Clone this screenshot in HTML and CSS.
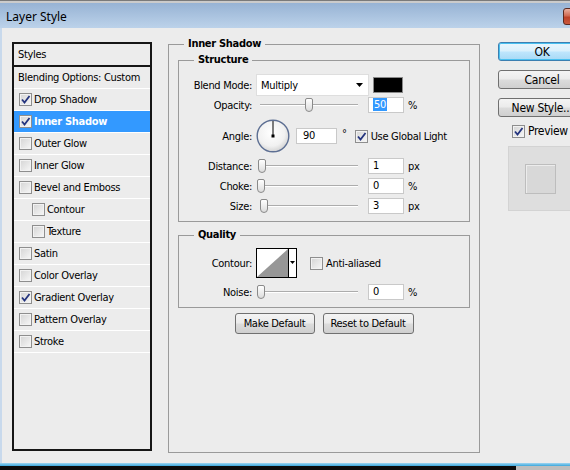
FILE: index.html
```html
<!DOCTYPE html>
<html lang="en">
<head>
    <meta charset="UTF-8">
    <title>Layer Style</title>
    <link rel="stylesheet" href="styles.css">
</head>
<body>
    <div class="titlebar">
        <span class="title">Layer Style</span>
        <span class="close"></span>
    </div>

    <div class="dialog">
        <!-- left: list of effects -->
        <div class="styles-panel">
            <div class="panel-head">Styles</div>
            <ul class="style-list">
                <li class="plain">Blending Options: Custom</li>
                <li><span class="cb"><svg viewBox="0 0 11 11"><path d="M2 5.5 L4.5 8.5 L9.5 2"/></svg></span>Drop Shadow</li>
                <li class="active"><span class="cb"><svg viewBox="0 0 11 11"><path d="M2 5.5 L4.5 8.5 L9.5 2"/></svg></span>Inner Shadow</li>
                <li><span class="cb"></span>Outer Glow</li>
                <li><span class="cb"></span>Inner Glow</li>
                <li><span class="cb"></span>Bevel and Emboss</li>
                <li class="sub"><span class="cb"></span>Contour</li>
                <li class="sub"><span class="cb"></span>Texture</li>
                <li><span class="cb"></span>Satin</li>
                <li><span class="cb"></span>Color Overlay</li>
                <li><span class="cb"><svg viewBox="0 0 11 11"><path d="M2 5.5 L4.5 8.5 L9.5 2"/></svg></span>Gradient Overlay</li>
                <li><span class="cb"></span>Pattern Overlay</li>
                <li><span class="cb"></span>Stroke</li>
            </ul>
        </div>

        <!-- middle: settings -->
        <fieldset class="group main">
            <legend>Inner Shadow</legend>

            <fieldset class="group structure">
                <legend>Structure</legend>
                <div class="row row-blend">
                    <span class="lbl">Blend Mode:</span>
                    <div class="select">
                        <span class="select-text">Multiply</span>
                        <svg width="7" height="4" viewBox="0 0 7 4"><path d="M0 0 H7 L3.5 4 Z" fill="#000"/></svg>
                    </div>
                    <span class="swatch"></span>
                </div>
                <div class="row row-opacity">
                    <span class="lbl">Opacity:</span>
                    <div class="slider"><span class="thumb" style="margin-left: 49px"></span></div>
                    <div class="num"><span class="sel">50</span></div>
                    <span class="unit">%</span>
                </div>
                <div class="row row-angle">
                    <span class="lbl">Angle:</span>
                    <svg class="dial" width="34" height="34" viewBox="0 0 34 34">
                        <defs>
                            <radialGradient id="dialFill" cx="45%" cy="40%" r="60%">
                                <stop offset="0" stop-color="#ffffff"/>
                                <stop offset="0.7" stop-color="#f1f1f1"/>
                                <stop offset="1" stop-color="#d4d4d4"/>
                            </radialGradient>
                        </defs>
                        <circle cx="17" cy="17" r="15.8" fill="url(#dialFill)" stroke="#5d6f93" stroke-width="1.4"/>
                        <line x1="17" y1="17" x2="17" y2="2" stroke="#000" stroke-width="1"/>
                        <rect x="15.5" y="15.5" width="3" height="3" fill="#000"/>
                    </svg>
                    <div class="num wide">90</div>
                    <span class="deg">°</span>
                    <span class="cb global"><svg viewBox="0 0 11 11"><path d="M2 5.5 L4.5 8.5 L9.5 2"/></svg></span>
                    <span class="cb-text">Use Global Light</span>
                </div>
                <div class="row row-distance">
                    <span class="lbl">Distance:</span>
                    <div class="slider"><span class="thumb" style="margin-left: 2px"></span></div>
                    <div class="num">1</div>
                    <span class="unit">px</span>
                </div>
                <div class="row">
                    <span class="lbl">Choke:</span>
                    <div class="slider"><span class="thumb" style="margin-left: 1px"></span></div>
                    <div class="num">0</div>
                    <span class="unit">%</span>
                </div>
                <div class="row">
                    <span class="lbl">Size:</span>
                    <div class="slider"><span class="thumb" style="margin-left: 4px"></span></div>
                    <div class="num">3</div>
                    <span class="unit">px</span>
                </div>
            </fieldset>

            <fieldset class="group quality">
                <legend>Quality</legend>
                <div class="row row-contour">
                    <span class="lbl">Contour:</span>
                    <svg class="contour" width="41" height="30" viewBox="0 0 41 30">
                        <rect x="0.5" y="0.5" width="40" height="29" fill="#fff" stroke="#000"/>
                        <path d="M1 29 L32 1 V29 Z" fill="#979797"/>
                        <line x1="32.5" y1="1" x2="32.5" y2="29" stroke="#000"/>
                        <path d="M34 13 H39 L36.5 16 Z" fill="#000"/>
                    </svg>
                    <span class="cb anti"></span>
                    <span class="cb-text">Anti-aliased</span>
                </div>
                <div class="row row-noise">
                    <span class="lbl">Noise:</span>
                    <div class="slider"><span class="thumb" style="margin-left: 1px"></span></div>
                    <div class="num">0</div>
                    <span class="unit">%</span>
                </div>
            </fieldset>

            <div class="actions">
                <button class="btn make">Make Default</button>
                <button class="btn reset">Reset to Default</button>
            </div>
        </fieldset>

        <!-- right: dialog buttons + preview -->
        <div class="side">
            <button class="btn big default">OK</button>
            <button class="btn big">Cancel</button>
            <button class="btn big">New Style...</button>
            <div class="preview-check">
                <span class="cb"><svg viewBox="0 0 11 11"><path d="M2 5.5 L4.5 8.5 L9.5 2"/></svg></span>
                <span class="preview-label">Preview</span>
            </div>
            <div class="preview">
                <div class="preview-swatch"></div>
            </div>
        </div>
    </div>

    <div class="edge"></div>
    <div class="taskbar"><span class="tray"></span></div>
</body>
</html>
```

FILE: styles.css
```css
body {
    margin: 0;
    width: 570px;
    height: 470px;
    overflow: hidden;
    background: #0b0b0b;
    color: #000;
    font-family: "DejaVu Sans Condensed", "DejaVu Sans", sans-serif;
    font-stretch: condensed;
    font-size: 11px;
    letter-spacing: -0.3px;
}

/* title bar */
.titlebar {
    height: 28px;
    box-sizing: border-box;
    padding: 3px 0 0 6px;
    display: flex;
    align-items: center;
    border-top: 1px solid #7a7a7a;
    background: linear-gradient(#cbcbcb 0, #cbcbcb 2px, #97b3d4 2px, #bcd2ea 100%);
}

.title {
    flex: 1;
    font-family: "Noto Sans", sans-serif;
    font-stretch: normal;
    font-size: 12px;
    letter-spacing: 0;
}

.close {
    align-self: flex-start;
    margin-top: 4px;
    margin-right: -38px;
    width: 45px;
    height: 17px;
    box-sizing: border-box;
    border: 1px solid #5b2a20;
    border-radius: 3px;
    background: linear-gradient(#eab0a0, #d06a52 45%, #bd4128 55%, #c9583d);
    flex: none;
}

/* dialog body */
.dialog {
    height: 435px;
    box-sizing: border-box;
    background: #ececec;
    border-left: 2px solid #c8d9ec;
    padding-left: 10px;
    display: flex;
    align-items: flex-start;
}

.styles-panel {
    margin-top: 14px;
    width: 140px;
    height: 409px;
    box-sizing: border-box;
    border: 2px solid #161616;
    flex: none;
}

.panel-head {
    height: 21px;
    line-height: 21px;
    padding-left: 4px;
    border-bottom: 2px solid #161616;
}

.style-list {
    list-style: none;
    margin: 0;
    padding: 0;
}

.style-list li {
    height: 21px;
    border-bottom: 1px solid #fff;
    display: flex;
    align-items: center;
    padding-left: 5px;
    white-space: nowrap;
}

.style-list li.plain {
    padding-left: 4px;
}

.style-list li.sub {
    padding-left: 18px;
}

.style-list li.active {
    background: #3399ff;
    color: #fff;
    font-weight: bold;
}

/* checkbox */
.cb {
    width: 13px;
    height: 13px;
    box-sizing: border-box;
    border: 1px solid #8e8e8e;
    background: linear-gradient(135deg, #d4d4d4, #f7f7f7);
    box-shadow: inset 0 0 0 1px #f2f2f2;
    margin-right: 2px;
    flex: none;
    display: inline-flex;
}

.cb svg {
    width: 11px;
    height: 11px;
}

.cb path {
    fill: none;
    stroke: #24347e;
    stroke-width: 1.8;
}

/* group boxes */
.group {
    margin: 0;
    padding: 0 9px;
    border: 1px solid #9a9a9a;
    min-width: 0;
}

.group legend {
    margin-left: 6px;
    padding: 0 4px;
    font-weight: bold;
    line-height: 14px;
}

.main {
    margin-top: 9px;
    margin-left: 16px;
    width: 312px;
    height: 416px;
    box-sizing: border-box;
    flex: none;
}

.structure {
    margin-top: 2px;
    padding: 7px 9px 7px;
}

.quality {
    margin-top: 6px;
    padding: 6px 9px 7px;
}

.row {
    display: flex;
    align-items: center;
    height: 16px;
    margin-top: 4px;
    white-space: nowrap;
}

.row-blend {
    height: 22px;
    margin-top: 0;
}

.row-opacity {
    margin-top: 1px;
}

.row-angle {
    height: 34px;
    margin-top: 6px;
}

.row-distance {
    margin-top: 5px;
}

.row-contour {
    height: 30px;
    margin-top: 0;
}

.row-noise {
    margin-top: 6px;
}

.lbl {
    width: 64px;
    margin-right: 4px;
    text-align: right;
    flex: none;
}

.select {
    width: 113px;
    height: 22px;
    box-sizing: border-box;
    background: #fff;
    border: 1px solid #dedede;
    display: flex;
    align-items: center;
    padding: 0 5px 0 4px;
}

.select-text {
    flex: 1;
}

.swatch {
    width: 30px;
    height: 16px;
    box-sizing: border-box;
    margin-left: 4px;
    background: #000;
    border: 1px solid #8a8a8a;
}

.slider {
    width: 102px;
    height: 16px;
    display: flex;
    align-items: center;
    flex: none;
    background:
        linear-gradient(#acacac, #acacac) 4px 7px / 98px 1px no-repeat,
        linear-gradient(#fff, #fff) 4px 8px / 98px 1px no-repeat;
}

.thumb {
    width: 8px;
    height: 14px;
    box-sizing: border-box;
    border: 1px solid #8a8a8a;
    border-radius: 2px 2px 4px 4px;
    background: linear-gradient(#ffffff, #dcdcdc);
}

.num {
    width: 36px;
    height: 16px;
    box-sizing: border-box;
    margin-left: 10px;
    padding-left: 4px;
    line-height: 14px;
    background: #fff;
    border: 1px solid #c9c9c9;
    flex: none;
}

.num.wide {
    width: 41px;
    margin-left: 6px;
    padding-left: 6px;
}

.sel {
    background: #3399ff;
    color: #fff;
    padding: 0 1px;
}

.unit {
    margin-left: 4px;
}

.deg {
    margin-left: 5px;
    margin-top: -6px;
}

.cb.global {
    margin-left: 8px;
}

.cb.anti {
    margin-left: 13px;
}

.cb-text {
    margin-left: 1px;
}

.actions {
    margin-top: 5px;
    display: flex;
    justify-content: center;
    gap: 8px;
}

/* buttons */
.btn {
    height: 21px;
    box-sizing: border-box;
    padding: 0;
    border: 1px solid #707070;
    border-radius: 3px;
    background: linear-gradient(#f4f4f4 0, #ebebeb 48%, #dcdcdc 52%, #cfcfcf 100%);
    font: inherit;
    letter-spacing: inherit;
    color: #000;
}

.btn.make {
    width: 80px;
}

.btn.reset {
    width: 91px;
}

.side {
    margin-top: 14px;
    margin-left: 18px;
    display: flex;
    flex-direction: column;
    align-items: flex-start;
    gap: 9px;
    flex: none;
}

.btn.big {
    width: 88px;
    height: 19px;
    font-size: 12px;
}

.btn.default {
    border-color: #3c7fb1;
    box-shadow: inset 0 0 0 1px #48c0f0;
    background: linear-gradient(#eaf6fd 0, #d9f0fc 48%, #bee6fd 52%, #a7d9f5 100%);
}

.preview-check {
    margin-top: -2px;
    margin-left: 14px;
    display: flex;
    align-items: center;
}

.preview-label {
    margin-left: 1px;
    font-size: 12px;
}

.preview {
    margin-top: -1px;
    margin-left: 10px;
    width: 72px;
    height: 65px;
    box-sizing: border-box;
    padding: 17px 0 0 16px;
    background: #dedede;
    border: 1px solid #d3d3d3;
}

.preview-swatch {
    width: 31px;
    height: 30px;
    box-sizing: border-box;
    border: 1px solid #bdbdbd;
    background: #d8d8d8;
    box-shadow: inset 1px 1px 0 #ececec;
}

/* bottom edge of the window and the task bar */
.edge {
    height: 3px;
    background: linear-gradient(#9fd6f2, #3aa7dc);
}

.taskbar {
    height: 4px;
    display: flex;
    justify-content: flex-end;
}

.tray {
    width: 54px;
    background: #bdbdbd;
}
```
